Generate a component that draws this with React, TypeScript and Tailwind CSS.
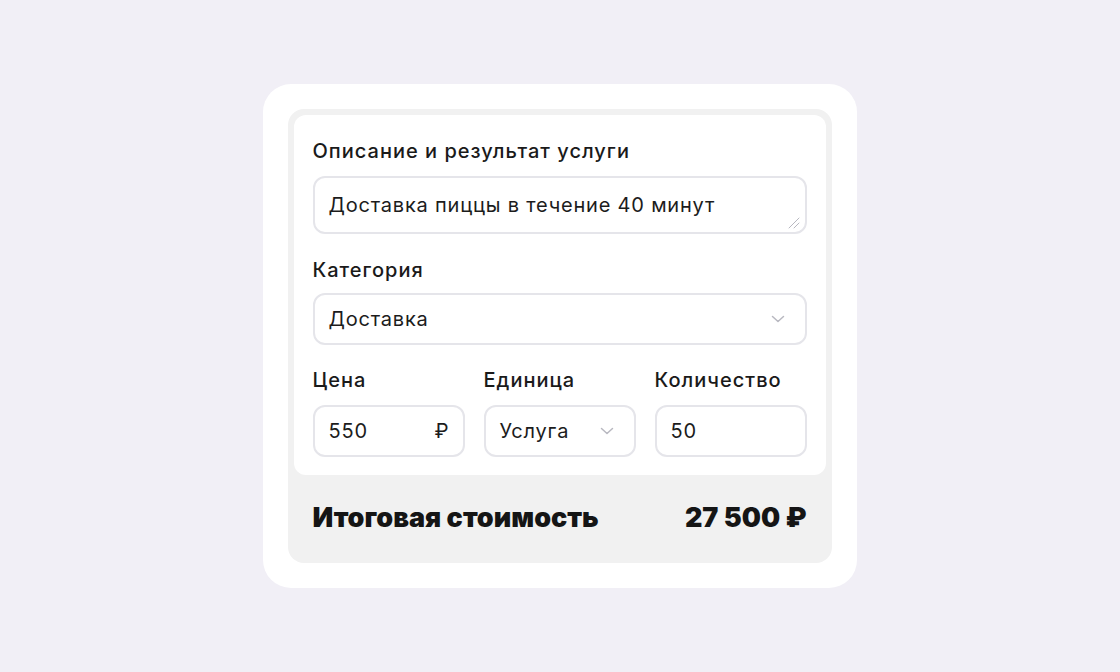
import React from "react";

const Chevron = () => (
  <svg width="14" height="8" viewBox="0 0 14 8" fill="none">
    <path d="M1.5 1.5L7 6.5L12.5 1.5" stroke="#b8b8c0" strokeWidth="1.5" strokeLinecap="round" strokeLinejoin="round" />
  </svg>
);

const Resize = () => (
  <svg width="14" height="13" viewBox="0 0 14 13" fill="none" className="absolute right-[4px] bottom-[3px]">
    <path d="M12 2L2 12M12 7L7 12" stroke="#b8b8c0" strokeWidth="1" strokeLinecap="round" />
  </svg>
);

const labelCls = "text-[20px] leading-[24px] font-medium tracking-[1px] text-[#1a1a1a]";
const valueCls = "text-[20px] leading-[24px] tracking-[0.8px] text-[#1c1c1c]";
const boxCls = "rounded-[12px] border-2 border-[#e5e5ea] bg-white";

export default function App() {
  return (
    <div
      className="w-[1120px] h-[672px] bg-[#f1eff6] flex items-center justify-center pr-[1px]"
      style={{ fontFamily: "Inter, 'Noto Sans', sans-serif" }}
    >
      <div className="w-[594px] h-[504px] bg-white rounded-[28px] p-[25px]">
        <div className="w-full h-full bg-[#f1f1f1] rounded-[16px] px-[6px] pt-[6px] flex flex-col">
          <div className="bg-white rounded-[12px] pt-[24px] px-[19px] pb-[18px] flex flex-col">
            <div className={labelCls}>Описание и результат услуги</div>
            <div className={`relative mt-[13px] h-[58px] ${boxCls} flex items-center pl-[14px]`}>
              <span className={valueCls}>Доставка пиццы в течение 40 минут</span>
              <Resize />
            </div>
            <div className={`mt-[24px] ${labelCls}`}>Категория</div>
            <div className={`mt-[11px] h-[52px] ${boxCls} flex items-center justify-between pl-[14px] pr-[20px]`}>
              <span className={valueCls}>Доставка</span>
              <Chevron />
            </div>
            <div className="mt-[23px] grid grid-cols-3 gap-x-[19px]">
              <div className="flex flex-col">
                <div className={labelCls}>Цена</div>
                <div className={`mt-[13px] h-[52px] ${boxCls} flex items-center justify-between pl-[14px] pr-[14px]`}>
                  <span className={valueCls}>550</span>
                  <span className="text-[20px] leading-[24px] text-[#1c1c1c]">₽</span>
                </div>
              </div>
              <div className="flex flex-col">
                <div className={labelCls}>Единица</div>
                <div className={`mt-[13px] h-[52px] ${boxCls} flex items-center justify-between pl-[14px] pr-[20px]`}>
                  <span className={valueCls}>Услуга</span>
                  <Chevron />
                </div>
              </div>
              <div className="flex flex-col">
                <div className={labelCls}>Количество</div>
                <div className={`mt-[13px] h-[52px] ${boxCls} flex items-center pl-[14px]`}>
                  <span className={valueCls}>50</span>
                </div>
              </div>
            </div>
          </div>
          <div className="flex-1 flex items-center justify-between px-[19px] pb-[3px] text-[#151515]">
            <span className="text-[27px] leading-[32px] font-black">Итоговая стоимость</span>
            <span className="text-[27px] leading-[32px] font-black">27 500 ₽</span>
          </div>
        </div>
      </div>
    </div>
  );
}
